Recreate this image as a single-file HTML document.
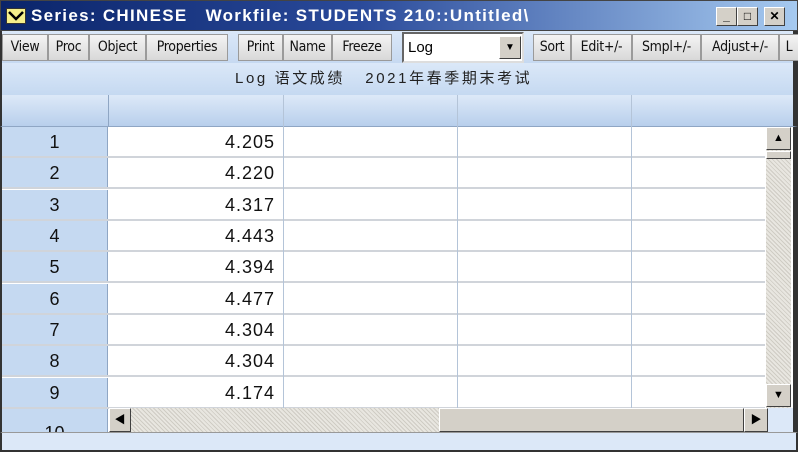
<!DOCTYPE html>
<html><head><meta charset="utf-8"><style>
*{margin:0;padding:0;box-sizing:border-box}
body{width:798px;height:452px;overflow:hidden;background:#fff;font-family:"Liberation Sans","Noto Sans CJK SC",sans-serif;position:relative}
.abs{position:absolute}
#title{left:0;top:0;width:798px;height:31px;background:linear-gradient(90deg,#0a246a 0%,#2a4a9a 45%,#a6caf0 100%);border:1px solid #444}
#title .t{left:30px;top:5px;color:#fff;font-weight:bold;font-size:17px;white-space:pre;letter-spacing:1.3px}
.wb{top:6px;width:21px;height:19px;background:#d4d0c8;border:1px solid;border-color:#fff #404040 #404040 #fff;font-size:12px;font-weight:bold;text-align:center;line-height:17px}
#tb{left:0;top:31px;width:798px;height:32px;background:linear-gradient(#dbe8f8,#c6d9f1);border-left:2px solid #333;border-right:5px solid #333}
.b{position:absolute;top:3px;height:27px;background:linear-gradient(#f4f4f4,#d8d8d8);border:1px solid #9a9a9a;font-size:14px;line-height:25px;text-align:center;font-family:"DejaVu Sans Condensed","Liberation Sans Narrow","Liberation Sans",sans-serif;letter-spacing:-0.3px;color:#111;white-space:nowrap;overflow:hidden}
#hd{left:0;top:63px;width:798px;height:32px;background:linear-gradient(#dbe8f8,#c5d9f1);border-left:2px solid #333;border-right:5px solid #333;font-size:15px;line-height:32px;letter-spacing:2.6px;color:#222;padding-left:233px;white-space:pre}
#ch{left:0;top:95px;width:798px;height:32px;background:linear-gradient(#dde9f8,#b8cfec);border-left:2px solid #333;border-right:5px solid #333;border-bottom:1px solid #8fa6c4}
.row{position:absolute;left:2px;width:763px;height:31px;border-bottom:2px solid #d0d4da}
.rh{position:absolute;left:0;top:0;width:106px;height:100%;background:#c5d9f1;text-align:center;font-size:18px;line-height:31px;color:#111;border-right:1px solid #8fa6c4}
.v{position:absolute;left:106px;width:175px;top:0;text-align:right;padding-right:8px;font-size:18px;line-height:31px;color:#111;letter-spacing:1px}
.vl{position:absolute;top:95px;width:1px;height:313px;background:#b4c4d8}
#status{left:0;top:432px;width:798px;height:20px;background:#dce8f8;border:2px solid #333;border-top:1px solid #999}
.sb{background:#d4d0c8;border:1px solid;border-color:#fff #404040 #404040 #fff}
.dots{background-color:#e8e6e0;background-image:repeating-linear-gradient(45deg,#cfccc4 0 1px,transparent 1px 3px)}
</style></head><body>
<div id="title" class="abs">
<div class="abs" style="left:5px;top:7px;width:20px;height:16px;background:#f5ef8a;border:1px solid #333"><svg width="18" height="14"><path d="M2 3 L9 10 L16 3" stroke="#000" stroke-width="2.5" fill="none"/></svg></div>
<div class="abs t">Series: CHINESE   Workfile: STUDENTS 210::Untitled\</div>
<div class="abs wb" style="left:715px">_</div>
<div class="abs wb" style="left:736px">□</div>
<div class="abs wb" style="left:763px">✕</div>
</div>
<div id="tb" class="abs">
<div class="b" style="left:0;width:46px">View</div>
<div class="b" style="left:46px;width:41px">Proc</div>
<div class="b" style="left:87px;width:57px">Object</div>
<div class="b" style="left:144px;width:82px">Properties</div>
<div class="b" style="left:236px;width:45px">Print</div>
<div class="b" style="left:281px;width:49px">Name</div>
<div class="b" style="left:330px;width:60px">Freeze</div>
<div class="abs" style="left:400px;top:1px;width:122px;height:31px;background:#fff;border:2px solid;border-color:#666 #ddd #ddd #666;font-size:15px;line-height:27px;padding-left:4px">Log
<div class="abs sb" style="right:1px;top:2px;width:22px;height:23px;text-align:center;font-size:10px;line-height:21px">▼</div></div>
<div class="b" style="left:531px;width:38px">Sort</div>
<div class="b" style="left:569px;width:61px">Edit+/-</div>
<div class="b" style="left:630px;width:69px">Smpl+/-</div>
<div class="b" style="left:699px;width:78px">Adjust+/-</div>
<div class="b" style="left:777px;width:20px">L</div>
</div>
<div id="hd" class="abs">Log 语文成绩   2021年春季期末考试</div>
<div id="ch" class="abs"><div style="position:absolute;left:106px;top:0;width:1px;height:31px;background:#8fa6c4"></div></div>
<div class="abs" style="left:0;top:127px;width:798px;height:305px;border-left:2px solid #333;border-right:5px solid #333"></div>
<div class="row" style="top:127px"><div class="rh">1</div><div class="v">4.205</div></div>
<div class="row" style="top:158px"><div class="rh">2</div><div class="v">4.220</div></div>
<div class="row" style="top:190px"><div class="rh">3</div><div class="v">4.317</div></div>
<div class="row" style="top:221px"><div class="rh">4</div><div class="v">4.443</div></div>
<div class="row" style="top:252px"><div class="rh">5</div><div class="v">4.394</div></div>
<div class="row" style="top:284px"><div class="rh">6</div><div class="v">4.477</div></div>
<div class="row" style="top:315px"><div class="rh">7</div><div class="v">4.304</div></div>
<div class="row" style="top:346px"><div class="rh">8</div><div class="v">4.304</div></div>
<div class="row" style="top:378px"><div class="rh">9</div><div class="v">4.174</div></div>
<div class="row" style="top:409px;height:23px;overflow:hidden;border-bottom:none"><div class="rh" style="line-height:48px">10</div></div>
<div class="vl" style="left:283px"></div>
<div class="vl" style="left:457px"></div>
<div class="vl" style="left:631px"></div>
<div class="abs dots" style="left:766px;top:127px;width:25px;height:281px"></div>
<div class="abs sb" style="left:766px;top:127px;width:25px;height:23px;text-align:center;font-size:11px;line-height:21px">▲</div>
<div class="abs sb" style="left:766px;top:151px;width:25px;height:8px"></div>
<div class="abs sb" style="left:766px;top:384px;width:25px;height:23px;text-align:center;font-size:11px;line-height:21px">▼</div>
<div class="abs dots" style="left:109px;top:408px;width:659px;height:24px"></div>
<div class="abs sb" style="left:109px;top:408px;width:22px;height:24px;text-align:center;font-size:11px;line-height:22px">◀</div>
<div class="abs sb" style="left:439px;top:408px;width:305px;height:24px"></div>
<div class="abs sb" style="left:744px;top:408px;width:24px;height:24px;text-align:center;font-size:11px;line-height:22px">▶</div>
<div class="abs" style="left:768px;top:408px;width:25px;height:24px;background:#dce8f8"></div>
<div id="status" class="abs"></div>
</body></html>
